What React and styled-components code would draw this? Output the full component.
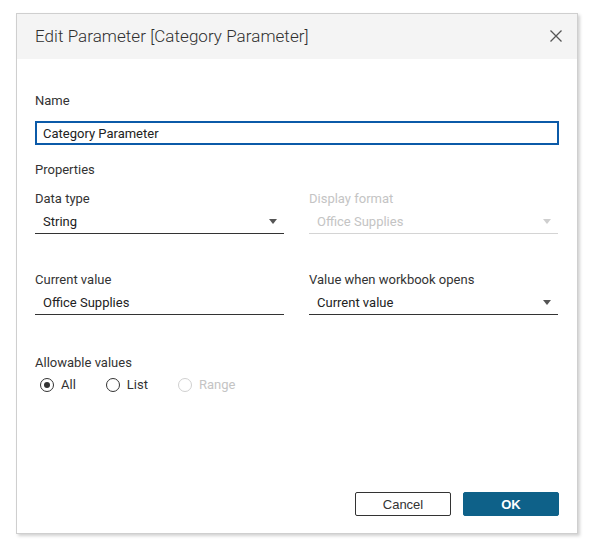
import React, { useState } from 'react'
import styled, { createGlobalStyle } from 'styled-components'

const GlobalStyle = createGlobalStyle`
  html, body {
    margin: 0;
    padding: 0;
    background: #ffffff;
  }
  body {
    font-family: 'Roboto', 'Liberation Sans', sans-serif;
    color: #333333;
  }
`

const Page = styled.div`
  width: 596px;
  height: 546px;
  padding: 13px 0 0 16px;
  box-sizing: border-box;
`

const Dialog = styled.div`
  width: 562px;
  height: 521px;
  box-sizing: border-box;
  border: 1px solid #cfcfcf;
  background: #fff;
  box-shadow: 2px 2px 3px rgba(0, 0, 0, 0.18);
  display: flex;
  flex-direction: column;
`

const Header = styled.div`
  height: 45px;
  flex: none;
  background: #f4f4f4;
  display: flex;
  align-items: center;
  justify-content: space-between;
  padding: 0 13px 2px 18px;
  box-sizing: border-box;
`

const Title = styled.div`
  font-size: 17px;
  font-weight: 300;
  color: #2f2f2f;
  letter-spacing: 0.05px;
`

const CloseButton = styled.button`
  width: 16px;
  height: 16px;
  border: none;
  background: none;
  padding: 0;
  display: flex;
  align-items: center;
  justify-content: center;
  cursor: pointer;
`

const Body = styled.div`
  flex: 1;
  padding: 34px 18px 0 18px;
  display: flex;
  flex-direction: column;
`

const Label = styled.div`
  font-size: 13px;
  line-height: 16px;
  color: ${p => (p.disabled ? '#c4c4c4' : '#333')};
`

const NameInput = styled.input`
  margin-top: 12px;
  width: 524px;
  height: 24px;
  box-sizing: border-box;
  border: 2px solid #0b5aa8;
  outline: none;
  padding: 0 6px;
  font-family: inherit;
  font-size: 13px;
  color: #222;
`

const Section = styled(Label)`
  margin-top: 17px;
`

const Grid = styled.div`
  display: grid;
  grid-template-columns: 249px 249px;
  column-gap: 25px;
  row-gap: 38px;
  margin-top: 13px;
`

const Field = styled.div`
  display: flex;
  flex-direction: column;
`

const Control = styled.div`
  margin-top: 2px;
  height: 24px;
  border-bottom: 1px solid ${p => (p.disabled ? '#d4d4d4' : '#333')};
  display: flex;
  align-items: center;
  justify-content: space-between;
  padding: 0 7px 0 8px;
  font-size: 13px;
  color: ${p => (p.disabled ? '#c4c4c4' : '#222')};
`

const Caret = styled.span`
  width: 0;
  height: 0;
  border-left: 4.5px solid transparent;
  border-right: 4.5px solid transparent;
  border-top: 5px solid ${p => (p.disabled ? '#cfcfcf' : '#555')};
`

const Allowable = styled(Label)`
  margin-top: 40px;
`

const RadioRow = styled.div`
  display: flex;
  gap: 30px;
  margin-top: 6px;
  padding-left: 5px;
`

const RadioOption = styled.label`
  display: flex;
  align-items: center;
  gap: 7px;
  font-size: 13px;
  color: ${p => (p.disabled ? '#c4c4c4' : '#333')};
`

const Circle = styled.span`
  width: 14px;
  height: 14px;
  box-sizing: border-box;
  border-radius: 50%;
  border: 1px solid ${p => (p.disabled ? '#d0d0d0' : '#333')};
  display: flex;
  align-items: center;
  justify-content: center;

  &::after {
    content: '';
    width: 6px;
    height: 6px;
    border-radius: 50%;
    background: ${p => (p.checked ? '#333' : 'transparent')};
  }
`

const Footer = styled.div`
  display: flex;
  justify-content: flex-end;
  gap: 12px;
  padding: 0 18px 17px 0;
`

const Button = styled.button`
  width: 96px;
  height: 24px;
  box-sizing: border-box;
  border-radius: 2px;
  font-family: 'Liberation Sans', Arial, sans-serif;
  font-size: 13px;
  cursor: pointer;
  border: 1px solid ${p => (p.primary ? '#0e6189' : '#333')};
  background: ${p => (p.primary ? '#0e6189' : '#fff')};
  color: ${p => (p.primary ? '#fff' : '#333')};
  font-weight: ${p => (p.primary ? 700 : 400)};
`

const Radio = ({ label, checked, disabled, onSelect }) => (
  <RadioOption disabled={disabled} onClick={disabled ? undefined : onSelect}>
    <Circle checked={checked} disabled={disabled} />
    {label}
  </RadioOption>
)

export default function App() {
  const [name, setName] = useState('Category Parameter')
  const [allow, setAllow] = useState('All')

  return (
    <Page>
      <GlobalStyle />
      <Dialog>
        <Header>
          <Title>Edit Parameter [Category Parameter]</Title>
          <CloseButton aria-label="Close">
            <svg width="12" height="12" viewBox="0 0 12 12">
              <path d="M0.5 0.5 L11.5 11.5 M11.5 0.5 L0.5 11.5" stroke="#555" strokeWidth="1.3" />
            </svg>
          </CloseButton>
        </Header>
        <Body>
          <Label>Name</Label>
          <NameInput value={name} onChange={e => setName(e.target.value)} />
          <Section>Properties</Section>
          <Grid>
            <Field>
              <Label>Data type</Label>
              <Control>
                String
                <Caret />
              </Control>
            </Field>
            <Field>
              <Label disabled>Display format</Label>
              <Control disabled>
                Office Supplies
                <Caret disabled />
              </Control>
            </Field>
            <Field>
              <Label>Current value</Label>
              <Control>Office Supplies</Control>
            </Field>
            <Field>
              <Label>Value when workbook opens</Label>
              <Control>
                Current value
                <Caret />
              </Control>
            </Field>
          </Grid>
          <Allowable>Allowable values</Allowable>
          <RadioRow>
            {['All', 'List', 'Range'].map(opt => (
              <Radio
                key={opt}
                label={opt}
                checked={allow === opt}
                disabled={opt === 'Range'}
                onSelect={() => setAllow(opt)}
              />
            ))}
          </RadioRow>
        </Body>
        <Footer>
          <Button>Cancel</Button>
          <Button primary>OK</Button>
        </Footer>
      </Dialog>
    </Page>
  )
}
